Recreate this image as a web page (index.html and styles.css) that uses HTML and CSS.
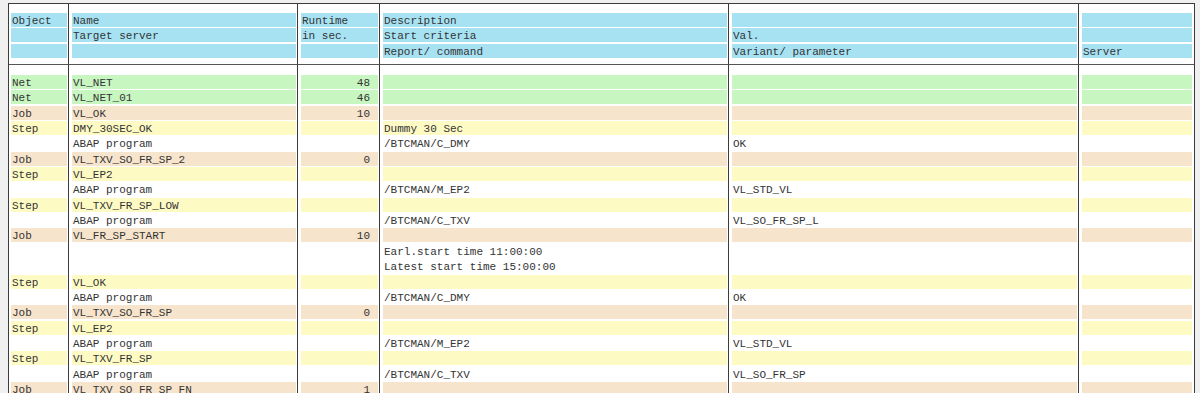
FILE: index.html
```html
<!DOCTYPE html>
<html lang="en">
<head>
    <meta charset="UTF-8">
    <meta name="viewport" content="width=device-width, initial-scale=1.0">
    <title>Job overview</title>
    <link rel="stylesheet" href="styles.css">
</head>
<body>
    <div class="frame">
        <table class="jobs">
            <colgroup>
                <col class="c-obj">
                <col class="c-name">
                <col class="c-rt">
                <col class="c-desc">
                <col class="c-val">
                <col class="c-srv">
            </colgroup>
            <thead>
                <tr class="sp sp-top"><td></td><td></td><td></td><td></td><td></td><td></td></tr>
                <tr class="head"><td>Object</td><td>Name</td><td>Runtime</td><td>Description</td><td></td><td></td></tr>
                <tr class="head"><td></td><td>Target server</td><td>in sec.</td><td>Start criteria</td><td>Val.</td><td></td></tr>
                <tr class="head"><td></td><td></td><td></td><td>Report/ command</td><td>Variant/ parameter</td><td>Server</td></tr>
                <tr class="sp sp-line"><td></td><td></td><td></td><td></td><td></td><td></td></tr>
            </thead>
            <tbody>
                <tr class="sp sp-body"><td></td><td></td><td></td><td></td><td></td><td></td></tr>
                <tr class="net"><td>Net</td><td>VL_NET</td><td class="num"><span>48</span></td><td></td><td></td><td></td></tr>
                <tr class="net"><td>Net</td><td>VL_NET_01</td><td class="num"><span>46</span></td><td></td><td></td><td></td></tr>
                <tr class="job"><td>Job</td><td>VL_OK</td><td class="num"><span>10</span></td><td></td><td></td><td></td></tr>
                <tr class="step"><td>Step</td><td>DMY_30SEC_OK</td><td></td><td>Dummy 30 Sec</td><td></td><td></td></tr>
                <tr class="plain"><td></td><td>ABAP program</td><td></td><td>/BTCMAN/C_DMY</td><td>OK</td><td></td></tr>
                <tr class="job"><td>Job</td><td>VL_TXV_SO_FR_SP_2</td><td class="num"><span>0</span></td><td></td><td></td><td></td></tr>
                <tr class="step"><td>Step</td><td>VL_EP2</td><td></td><td></td><td></td><td></td></tr>
                <tr class="plain"><td></td><td>ABAP program</td><td></td><td>/BTCMAN/M_EP2</td><td>VL_STD_VL</td><td></td></tr>
                <tr class="step"><td>Step</td><td>VL_TXV_FR_SP_LOW</td><td></td><td></td><td></td><td></td></tr>
                <tr class="plain"><td></td><td>ABAP program</td><td></td><td>/BTCMAN/C_TXV</td><td>VL_SO_FR_SP_L</td><td></td></tr>
                <tr class="job"><td>Job</td><td>VL_FR_SP_START</td><td class="num"><span>10</span></td><td></td><td></td><td></td></tr>
                <tr class="plain"><td></td><td></td><td></td><td>Earl.start time 11:00:00</td><td></td><td></td></tr>
                <tr class="plain"><td></td><td></td><td></td><td>Latest start time 15:00:00</td><td></td><td></td></tr>
                <tr class="step"><td>Step</td><td>VL_OK</td><td></td><td></td><td></td><td></td></tr>
                <tr class="plain"><td></td><td>ABAP program</td><td></td><td>/BTCMAN/C_DMY</td><td>OK</td><td></td></tr>
                <tr class="job"><td>Job</td><td>VL_TXV_SO_FR_SP</td><td class="num"><span>0</span></td><td></td><td></td><td></td></tr>
                <tr class="step"><td>Step</td><td>VL_EP2</td><td></td><td></td><td></td><td></td></tr>
                <tr class="plain"><td></td><td>ABAP program</td><td></td><td>/BTCMAN/M_EP2</td><td>VL_STD_VL</td><td></td></tr>
                <tr class="step"><td>Step</td><td>VL_TXV_FR_SP</td><td></td><td></td><td></td><td></td></tr>
                <tr class="plain"><td></td><td>ABAP program</td><td></td><td>/BTCMAN/C_TXV</td><td>VL_SO_FR_SP</td><td></td></tr>
                <tr class="job"><td>Job</td><td>VL_TXV_SO_FR_SP_FN</td><td class="num"><span>1</span></td><td></td><td></td><td></td></tr>
            </tbody>
        </table>
    </div>
</body>
</html>
```

FILE: styles.css
```css
*{
    margin: 0px;
    padding: 0px;
}

body{
    background: #f0f0f0;
    font-family: "Liberation Mono", "Courier New", monospace;
    font-size: 11px;
    color: #333;
    height: 393px;
    overflow: hidden;
}

.frame{
    margin: 3px 0 0 8px;
    width: 1185px;
    border: 1px solid #3c3c3c;
    border-bottom: none;
    background: #fff;
}

.jobs{
    border-collapse: separate;
    border-spacing: 0;
    table-layout: fixed;
    width: 1185px;
}

.jobs .c-obj{ width: 60px; }
.jobs .c-name{ width: 229px; }
.jobs .c-rt{ width: 82px; }
.jobs .c-desc{ width: 349px; }
.jobs .c-val{ width: 350px; }
.jobs .c-srv{ width: 115px; }

.jobs tr{
    height: 15.35px;
}

/* the coloured band is painted as a gradient so the text can sit 1px lower than the band */
.jobs td{
    --c: transparent;
    border-right: 1px solid #3c3c3c;
    padding: 1px 1px 0 3px;
    line-height: 14.35px;
    white-space: nowrap;
    overflow: hidden;
    text-indent: 1px;
    vertical-align: top;
    background-image: linear-gradient(var(--c), var(--c));
    background-origin: padding-box;
    background-repeat: no-repeat;
    background-position: 3px 0;
    background-size: calc(100% - 4px) 14.35px;
}
.jobs td:first-child{
    padding-left: 2px;
    background-position: 2px 0;
    background-size: calc(100% - 3px) 14.35px;
}
.jobs td:last-child{
    border-right: none;
    padding-right: 2px;
    background-size: calc(100% - 5px) 14.35px;
}

/* spacer rows between the frame, the header and the list */
.jobs .sp td{
    padding: 0;
    line-height: 0;
    font-size: 0;
    background: none;
}
.jobs .sp-top{ height: 9px; }
.jobs .sp-line{ height: 6px; }
.jobs .sp-line td{
    border-bottom: 1px solid #555;
}
.jobs .sp-body{ height: 10px; }

.jobs .head td{ --c: #a7e2f3; }
.jobs .net td{ --c: #c8f6c1; }
.jobs .job td{ --c: #f7e4cc; }
.jobs .step td{ --c: #fefac4; }
.jobs .plain td{ --c: #fff; }

.jobs .num{
    text-align: right;
}
.jobs .num span{
    display: inline-block;
    margin-right: 8px;
}
```
